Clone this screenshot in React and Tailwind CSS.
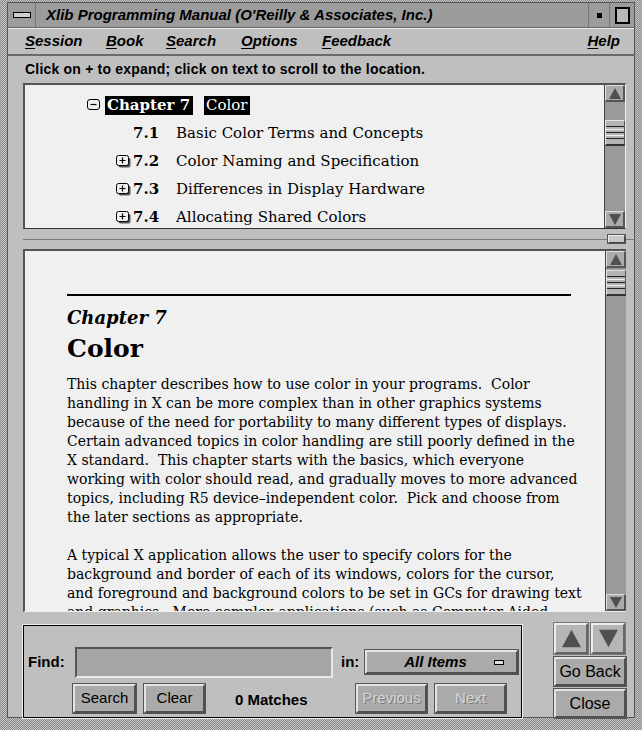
const SANS = { fontFamily: '"Liberation Sans", Arial, sans-serif' }
const SERIF = { fontFamily: '"DejaVu Serif", "Liberation Serif", serif' }

const MENU = [
  { k: 'S', rest: 'ession', w: 'w-[81px]' },
  { k: 'B', rest: 'ook', w: 'w-[60px]' },
  { k: 'S', rest: 'earch', w: 'w-[75px]' },
  { k: 'O', rest: 'ptions', w: 'w-[81px]' },
  { k: 'F', rest: 'eedback', w: 'w-[100px]' },
]

const TOC = [
  { n: '7.1', t: 'Basic Color Terms and Concepts', plus: false },
  { n: '7.2', t: 'Color Naming and Specification', plus: true },
  { n: '7.3', t: 'Differences in Display Hardware', plus: true },
  { n: '7.4', t: 'Allocating Shared Colors', plus: true },
]

const PARA1 = [
  'This chapter describes how to use color in your programs.  Color',
  'handling in X can be more complex than in other graphics systems',
  'because of the need for portability to many different types of displays.',
  'Certain advanced topics in color handling are still poorly defined in the',
  'X standard.  This chapter starts with the basics, which everyone',
  'working with color should read, and gradually moves to more advanced',
  'topics, including R5 device\u2013independent color.  Pick and choose from',
  'the later sections as appropriate.',
]

const PARA2 = [
  'A typical X application allows the user to specify colors for the',
  'background and border of each of its windows, colors for the cursor,',
  'and foreground and background colors to be set in GCs for drawing text',
  'and graphics.  More complex applications (such as Computer Aided',
]

function PlusIcon() {
  return (
    <svg width="15" height="13" viewBox="0 0 15 13">
      <rect x="2.5" y="2.5" width="12" height="10" rx="2" fill="#555" />
      <rect x="0.5" y="0.5" width="12" height="10" rx="2" fill="#f0f0f0" stroke="#000" />
      <path d="M3.5 5.5h6M6.5 2.5v6" stroke="#000" strokeWidth="1.2" />
    </svg>
  )
}

function MinusIcon() {
  return (
    <svg width="14" height="12" viewBox="0 0 14 12">
      <rect x="0.5" y="0.5" width="12" height="10" rx="2.5" fill="#f0f0f0" stroke="#000" />
      <path d="M3.5 5.5h6" stroke="#000" strokeWidth="1.2" />
    </svg>
  )
}

function Arrow({ up, big }) {
  const s = big ? 'w-[19px] h-[19px]' : 'w-[12px] h-[11px]'
  return (
    <svg className={s} viewBox="0 0 12 11">
      <path d={up ? 'M6 0L12 11H0Z' : 'M0 0H12L6 11Z'} fill="#505050" />
    </svg>
  )
}

function ScrollBtn({ up }) {
  return (
    <div className="h-[17px] bg-[#ababab] border-t border-l border-t-[#e0e0e0] border-l-[#e0e0e0] border-b-2 border-r-2 border-b-[#555] border-r-[#555] flex items-center justify-center">
      <Arrow up={up} />
    </div>
  )
}

function Thumb() {
  return (
    <div className="h-[26px] bg-[#b4b4b4] border-t border-l border-t-[#e4e4e4] border-l-[#e4e4e4] border-b-2 border-b-[#333] border-r border-r-[#555] flex flex-col justify-center gap-[2px]">
      <div className="h-px bg-[#222]" />
      <div className="h-px bg-[#f0f0f0]" />
      <div className="h-px bg-[#222]" />
      <div className="h-px bg-[#f0f0f0]" />
      <div className="h-px bg-[#222]" />
    </div>
  )
}

function ScrollBar({ before }) {
  return (
    <div className="w-[21px] bg-[#9a9a9a] border-l border-[#444] flex flex-col">
      <ScrollBtn up />
      <div className={`${before} shrink-0`} />
      <Thumb />
      <div className="flex-1" />
      <ScrollBtn />
    </div>
  )
}

function Btn({ children, className = '', disabled }) {
  return (
    <div
      className={`bg-[#aaaaaa] border-2 border-t-[#e4e4e4] border-l-[#e4e4e4] border-b-[#505050] border-r-[#505050] outline outline-1 outline-[#555] flex items-center justify-center text-[15px] ${disabled ? 'text-[#d6d6d6] [text-shadow:1px_1px_0_#7a7a7a]' : 'text-black'} ${className}`}
      style={SANS}
    >
      {children}
    </div>
  )
}

export default function App() {
  return (
    <div className="w-[642px] h-[730px] bg-[repeating-conic-gradient(#8a8a8a_0_25%,#c4c4c4_0_50%)] bg-[length:2px_2px] pl-[7px] pr-[7px] pt-[2px] pb-[12px] flex flex-col overflow-hidden" style={SANS}>
      <div className="border border-[#555] flex flex-col flex-1 min-h-0">
        {/* title bar */}
        <div className="h-[25px] bg-[#9c9c9c] flex items-center border-b border-[#666] shrink-0">
          <div className="w-[28px] h-full flex items-center justify-center border-r border-[#777]">
            <div className="w-[18px] h-[6px] border border-black bg-[#d0d0d0]" />
          </div>
          <div className="flex-1 pl-[10px] text-[15px] italic font-bold text-black">
            Xlib Programming Manual (O'Reilly &amp; Associates, Inc.)
          </div>
          <div className="w-[22px] h-full flex items-center justify-center border-l border-r border-[#777]">
            <div className="w-[5px] h-[5px] bg-black" />
          </div>
          <div className="w-[24px] h-full flex items-center justify-center">
            <div className="w-[15px] h-[17px] border-2 border-black bg-[#b8b8b8]" />
          </div>
        </div>

        {/* menubar */}
        <div className="h-[28px] bg-[#bfbfbf] border-t border-t-[#ececec] border-b-2 border-b-[#6a6a6a] flex items-center pl-[17px] pr-[8px] shrink-0">
          {MENU.map((m, i) => (
            <div key={i} className={`${m.w} text-[15px] italic font-bold text-black`}>
              <span className="underline underline-offset-2">{m.k}</span>
              {m.rest}
            </div>
          ))}
          <div className="flex-1" />
          <div className="text-[15px] italic font-bold text-black pr-[6px]">
            <span className="underline underline-offset-2">H</span>elp
          </div>
        </div>

        {/* main body */}
        <div className="flex-1 bg-[#bfbfbf] flex flex-col min-h-0 pl-[15px] pr-[8px]">
          <div className="h-[27px] flex items-center pl-[2px] text-[14px] tracking-[0.2px] font-bold text-black shrink-0">
            Click on + to expand; click on text to scroll to the location.
          </div>

          {/* TOC pane */}
          <div className="h-[146px] flex border-t-2 border-l-2 border-[#555] border-b border-b-[#333] border-r border-r-[#eee] shrink-0">
            <div className="flex-1 bg-[#f0f0f0] pt-[6px]" style={SERIF}>
              <div className="h-[28px] flex items-center text-[15px]">
                <div className="w-[80px] flex justify-end pr-[4px]"><MinusIcon /></div>
                <div className="bg-black text-white font-bold px-[2px] w-[88px] leading-[19px]">Chapter 7</div>
                <div className="w-[11px]" />
                <div className="bg-black text-white px-[2px] leading-[19px]">Color</div>
              </div>
              {TOC.map((r) => (
                <div key={r.n} className="h-[28px] flex items-center text-[15px] text-black">
                  <div className="w-[108px] flex justify-end pr-[2px]">{r.plus && <PlusIcon />}</div>
                  <div className="w-[43px] font-bold">{r.n}</div>
                  <div>{r.t}</div>
                </div>
              ))}
            </div>
            <ScrollBar before="h-[18px]" />
          </div>

          {/* sash */}
          <div className="h-[20px] flex flex-col justify-center relative shrink-0">
            <div className="h-px bg-[#7a7a7a] -mr-[8px]" />
            <div className="absolute right-[1px] top-[6px] w-[17px] h-[8px] bg-[#c8c8c8] border border-[#444] border-t-[#f0f0f0] border-l-[#f0f0f0] outline outline-1 outline-[#555]" />
          </div>

          {/* content pane */}
          <div className="h-[363px] flex border-t-2 border-l-2 border-[#555] border-b border-b-[#eee] shrink-0">
            <div className="flex-1 bg-[#f0f0f0] overflow-hidden pl-[42px] pr-[34px] pt-[43px] text-black" style={SERIF}>
              <div className="h-[2px] bg-black" />
              <div className="mt-[11px] text-[18px] italic font-bold leading-[22px]">Chapter 7</div>
              <div className="mt-[5px] text-[25px] font-bold leading-[30px]">Color</div>
              <div className="mt-[11px] text-[14px] leading-[19px] whitespace-pre">
                {PARA1.map((l, i) => <div key={i}>{l}</div>)}
              </div>
              <div className="mt-[19px] text-[14px] leading-[19px] whitespace-pre">
                {PARA2.map((l, i) => <div key={i}>{l}</div>)}
              </div>
            </div>
            <ScrollBar before="h-[2px]" />
          </div>

          {/* bottom */}
          <div className="flex-1 flex pt-[11px] pb-[1px]">
            <div className="w-[500px] border border-black outline outline-1 outline-[#eee] mr-[32px] mt-[2px] flex flex-col pl-[4px] pt-[20px]">
              <div className="flex items-center h-[32px]">
                <div className="w-[47px] text-[15px] font-bold">Find:</div>
                <div className="w-[258px] h-[31px] bg-[#a6a6a6] border-2 border-t-[#555] border-l-[#555] border-b-[#e8e8e8] border-r-[#e8e8e8]" />
                <div className="w-[32px] pl-[8px] text-[15px] font-bold">in:</div>
                <div className="w-[153px] h-[24px] bg-[#aaaaaa] border-2 border-t-[#e4e4e4] border-l-[#e4e4e4] border-b-[#505050] border-r-[#505050] outline outline-1 outline-[#555] flex items-center">
                  <div className="flex-1 text-center text-[15px] italic font-bold pl-[10px]">All Items</div>
                  <div className="w-[10px] h-[5px] bg-[#ddd] border border-black mr-[12px]" />
                </div>
              </div>
              <div className="flex items-center mt-[6px]">
                <div className="w-[45px]" />
                <Btn className="w-[63px] h-[29px]">Search</Btn>
                <div className="w-[8px]" />
                <Btn className="w-[61px] h-[29px]">Clear</Btn>
                <div className="w-[151px] pl-[30px] text-[15px] font-bold pt-[3px]">0 Matches</div>
                <Btn disabled className="w-[71px] h-[29px]">Previous</Btn>
                <div className="w-[8px]" />
                <Btn disabled className="w-[71px] h-[29px]">Next</Btn>
              </div>
            </div>
            <div className="w-[72px] flex flex-col gap-[3px]">
              <div className="flex gap-[3px]">
                <div className="w-[34px] h-[31px] bg-[#b6b6b6] border-2 border-t-[#ececec] border-l-[#ececec] border-b-[#666] border-r-[#666] outline outline-1 outline-[#777] flex items-center justify-center">
                  <Arrow up big />
                </div>
                <div className="w-[34px] h-[31px] bg-[#b6b6b6] border-2 border-t-[#ececec] border-l-[#ececec] border-b-[#666] border-r-[#666] outline outline-1 outline-[#777] flex items-center justify-center">
                  <Arrow big />
                </div>
              </div>
              <Btn className="h-[29px] text-[16px]">Go Back</Btn>
              <Btn className="h-[29px] text-[16px]">Close</Btn>
            </div>
          </div>
        </div>
      </div>
    </div>
  )
}
